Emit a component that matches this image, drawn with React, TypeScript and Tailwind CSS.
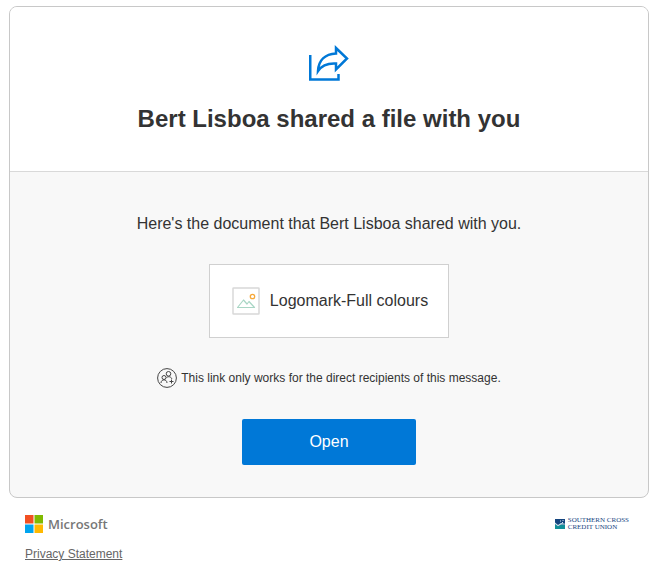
import React from 'react';

interface ShareMessage {
  sender: string;
  fileName: string;
}

const message: ShareMessage = {
  sender: 'Bert Lisboa',
  fileName: 'Logomark-Full colours',
};

function ShareIcon() {
  return (
    <svg width="40" height="36" viewBox="0 0 40 36" fill="none" stroke="#0078d7" strokeWidth="2.5" aria-hidden="true">
      <path d="M1.250 10V34.500H29.500V29" />
      <path d="M27 3L38 13.500L27 24.500V18.500C19 18 13 20 9 26C9.500 15.500 16 9 27 8.500Z" />
    </svg>
  );
}

function PictureIcon() {
  return (
    <svg width="28" height="28" viewBox="0 0 28 28" fill="none" className="shrink-0" aria-hidden="true">
      <rect x="1" y="1" width="26" height="26" rx="0.5" fill="#fff" stroke="#d8d8d8" strokeWidth="1.5" />
      <path d="M5.500 20.500L11.500 13L15 17L17 14.500L22.500 20.500Z" stroke="#a9d6c5" strokeWidth="1.200" strokeLinejoin="round" />
      <circle cx="20.500" cy="9.500" r="2.200" stroke="#f7a93a" strokeWidth="1.300" />
    </svg>
  );
}

function PeopleIcon() {
  return (
    <svg width="20" height="20" viewBox="0 0 20 20" fill="none" stroke="#444" className="shrink-0" aria-hidden="true">
      <circle cx="10" cy="10" r="9.400" />
      <circle cx="7" cy="9.500" r="2" />
      <circle cx="11.500" cy="5.800" r="2.300" />
      <path d="M4 15C4 10.800 10 10.800 10 15M9.500 9.500C11.500 8 14.500 8.800 14.800 11M14.500 11.500V15.500M12.500 13.500H16.500" />
    </svg>
  );
}

function MicrosoftLogo() {
  return (
    <svg width="18" height="18" viewBox="0 0 18 18" aria-hidden="true">
      <path d="M0 0H8.500V8.500H0Z" fill="#f25022" />
      <path d="M9.500 0H18V8.500H9.500Z" fill="#7fba00" />
      <path d="M0 9.500H8.500V18H0Z" fill="#00a4ef" />
      <path d="M9.500 9.500H18V18H9.500Z" fill="#ffb900" />
    </svg>
  );
}

function CreditUnionLogo() {
  return (
    <svg width="10" height="10" viewBox="0 0 10 10" aria-hidden="true">
      <path d="M0 0H10V10H0Z" fill="#15457f" />
      <path d="M0 5L3 7L6 5.500L10 6V10H0Z" fill="#118f98" />
      <path d="M0 3.500L3 6L6 4L10 4.800V5.600L6 5.500L3 7.200L0 5ZM5 1.500H6V2.500H5ZM7.500 1H8.500V2H7.500ZM7 3H8V4H7Z" fill="#d4e6ee" />
    </svg>
  );
}

export default function App() {
  return (
    <div className="bg-white pt-1.5 pr-2 pl-[9px] font-['Liberation_Sans',Arial,sans-serif] text-[#333]">
      <main className="mx-auto max-w-[640px] overflow-hidden rounded-lg border border-[#c8c8c8] bg-[#f8f8f8]">
        <header className="flex flex-col items-center border-b border-[#d9d9d9] bg-white px-4 pt-[38px] pb-9">
          <ShareIcon />
          <h1 className="mt-[22px] text-center text-2xl font-bold">{message.sender} shared a file with you</h1>
        </header>

        <section className="flex flex-col items-center px-4 pt-10 pb-8">
          <p className="text-center text-base">Here's the document that {message.sender} shared with you.</p>

          <a
            href="#file"
            className="mt-7 flex h-[74px] items-center gap-2.5 border border-[#d0d0d0] bg-white pr-5 pl-[22px]"
          >
            <PictureIcon />
            <span>{message.fileName}</span>
          </a>

          <div className="mt-[30px] flex items-center gap-1 text-xs leading-5">
            <PeopleIcon />
            <span>This link only works for the direct recipients of this message.</span>
          </div>

          <button type="button" className="mt-[31px] h-[46px] w-[174px] rounded-xs bg-[#0078d7] text-base text-white">
            Open
          </button>
        </section>
      </main>

      <footer className="mx-auto max-w-[640px] px-4 pt-4">
        <div className="flex items-center justify-between pr-1">
          <div className="flex items-center gap-[5px]">
            <MicrosoftLogo />
            <span className="font-['Open_Sans',sans-serif] text-[13px] leading-5 font-semibold text-[#777]">Microsoft</span>
          </div>
          <div className="flex items-center gap-[3px]">
            <CreditUnionLogo />
            <div className="font-['Liberation_Serif',serif] text-[7px] leading-[7px] text-[#15457f]">
              <p>SOUTHERN CROSS</p>
              <p>CREDIT UNION</p>
            </div>
          </div>
        </div>
        <a href="#privacy" className="mt-3 inline-block text-xs leading-4 text-[#666] underline">
          Privacy Statement
        </a>
      </footer>
    </div>
  );
}
